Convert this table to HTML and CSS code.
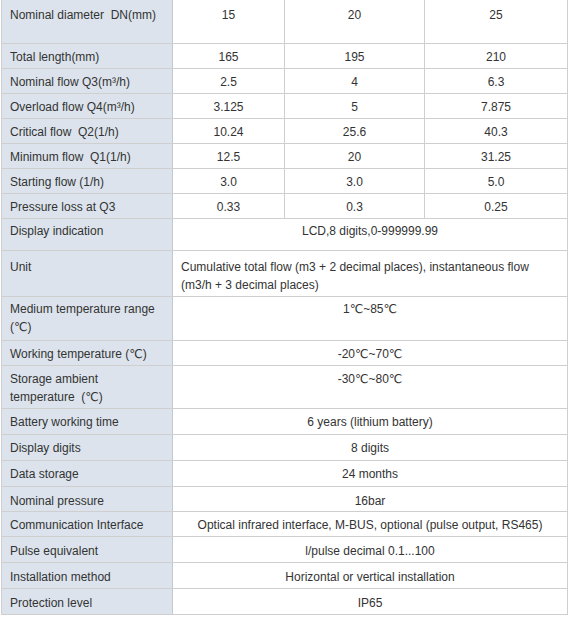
FILE: index.html
```html
<!DOCTYPE html>
<html lang="en">
<head>
<meta charset="utf-8">
<title>Specifications</title>
<link rel="stylesheet" href="styles.css">
</head>
<body>
<div class="wrap">
<table class="spec">
  <colgroup>
    <col class="c-label">
    <col class="c-a">
    <col class="c-b">
    <col class="c-c">
  </colgroup>
  <tbody>
    <tr class="r-head">
      <td class="label">Nominal diameter&nbsp; DN(mm)</td>
      <td>15</td><td>20</td><td>25</td>
    </tr>
    <tr><td class="label">Total length(mm)</td><td>165</td><td>195</td><td>210</td></tr>
    <tr><td class="label">Nominal flow Q3(m³/h)</td><td>2.5</td><td>4</td><td>6.3</td></tr>
    <tr><td class="label">Overload flow Q4(m³/h)</td><td>3.125</td><td>5</td><td>7.875</td></tr>
    <tr><td class="label">Critical flow&nbsp; Q2(1/h)</td><td>10.24</td><td>25.6</td><td>40.3</td></tr>
    <tr><td class="label">Minimum flow&nbsp; Q1(1/h)</td><td>12.5</td><td>20</td><td>31.25</td></tr>
    <tr><td class="label">Starting flow (1/h)</td><td>3.0</td><td>3.0</td><td>5.0</td></tr>
    <tr><td class="label">Pressure loss at Q3</td><td>0.33</td><td>0.3</td><td>0.25</td></tr>
    <tr class="r-display"><td class="label">Display indication</td><td colspan="3">LCD,8 digits,0-999999.99</td></tr>
    <tr class="r-unit"><td class="label">Unit</td><td colspan="3" class="left">Cumulative total flow (m3 + 2 decimal places), instantaneous flow<br>(m3/h + 3 decimal places)</td></tr>
    <tr class="r-medium"><td class="label">Medium temperature range<br>(℃)</td><td colspan="3">1℃~85℃</td></tr>
    <tr><td class="label">Working temperature (℃)</td><td colspan="3">-20℃~70℃</td></tr>
    <tr class="r-storage"><td class="label">Storage ambient<br>temperature&nbsp; (℃)</td><td colspan="3">-30℃~80℃</td></tr>
    <tr class="r-tall"><td class="label">Battery working time</td><td colspan="3">6 years (lithium battery)</td></tr>
    <tr class="r-tall"><td class="label">Display digits</td><td colspan="3">8 digits</td></tr>
    <tr class="r-tall"><td class="label">Data storage</td><td colspan="3">24 months</td></tr>
    <tr class="r-low"><td class="label">Nominal pressure</td><td colspan="3">16bar</td></tr>
    <tr><td class="label">Communication Interface</td><td colspan="3">Optical infrared interface, M-BUS, optional (pulse output, RS465)</td></tr>
    <tr class="r-tall r-low"><td class="label">Pulse equivalent</td><td colspan="3">l/pulse decimal 0.1...100</td></tr>
    <tr class="r-tall r-low"><td class="label">Installation method</td><td colspan="3">Horizontal or vertical installation</td></tr>
    <tr class="r-tall r-low"><td class="label">Protection level</td><td colspan="3">IP65</td></tr>
  </tbody>
</table>
</div>
</body>
</html>
```

FILE: styles.css
```css
html, body {
  margin: 0;
  padding: 0;
  background: #ffffff;
}

.wrap {
  padding-left: 1px;
}

.spec {
  border-collapse: collapse;
  table-layout: fixed;
  width: 567px;
  font-family: "Liberation Sans", Arial, "DejaVu Sans", sans-serif;
  font-size: 12px;
  color: #333333;
}

.c-label { width: 171px; }
.c-a { width: 112px; }
.c-b { width: 140px; }
.c-c { width: 143px; }

.spec td {
  border: 1px solid #cfcfcf;
  padding: 4px 8px 2px 8px;
  line-height: 18px;
  vertical-align: top;
  text-align: center;
}

.spec tr:first-child td {
  border-top: 0;
}

.spec td.label {
  background: #dce3ec;
  text-align: left;
  border-right-color: #c3c9d1;
}

.spec td.left {
  text-align: left;
}

.r-head td { padding-top: 6px; padding-bottom: 19px; }
.r-display td { padding-top: 3px; padding-bottom: 10px; }
.r-unit td { padding-top: 7px; padding-bottom: 2px; }
.r-medium td { padding-top: 3px; padding-bottom: 4px; }
.r-storage td { padding-top: 4px; padding-bottom: 2px; }
.r-tall td { padding-top: 4px; padding-bottom: 3px; }
.r-low td { padding-top: 5px; padding-bottom: 1px; }
.r-tall.r-low td { padding-top: 5px; padding-bottom: 2px; }
```
